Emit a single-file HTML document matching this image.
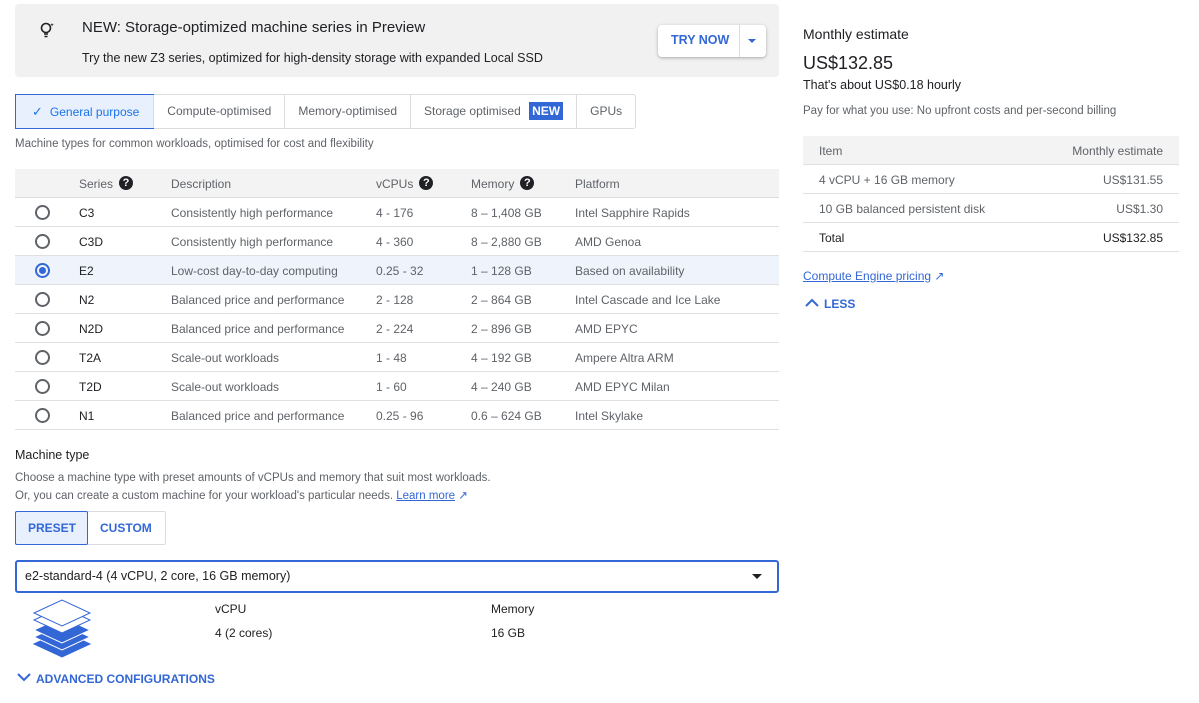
<!DOCTYPE html>
<html><head><meta charset="utf-8"><style>
*{box-sizing:border-box;margin:0;padding:0}
body{width:1199px;height:703px;background:#fff;font-family:"Liberation Sans",Arial,sans-serif;color:#202124;position:relative;overflow:hidden;font-size:12px}
.a{position:absolute;white-space:nowrap}
.banner{position:absolute;left:15px;top:4px;width:764px;height:73px;background:#f1f1f1;border-radius:4px}
.tabs{position:absolute;left:15px;top:94px;height:35px;display:flex;border:1px solid #dadce0;border-radius:3px}
.tab{padding:0 13px;line-height:33px;color:#5f6368;border-left:1px solid #dadce0;font-size:12px}
.tab:first-child{border-left:none}
.tab.sel{background:#e8f0fe;color:#1a73e8;border:1px solid #3367d6;margin:-1px;line-height:33px;padding:0 14px 0 16px}
.row{position:absolute;left:15px;width:764px;height:29px;border-bottom:1px solid #e0e0e0;color:#5f6368;font-size:12px}
.row span{position:absolute;top:8px}
.radio{position:absolute;left:20px;top:7px;width:15px;height:15px;border:2px solid #5f6368;border-radius:50%}
.q{display:inline-block;width:14px;height:14px;border-radius:50%;background:#202124;color:#fff;font-size:11px;font-weight:bold;text-align:center;line-height:14px;vertical-align:top;margin-left:6px;margin-top:-1px;font-style:normal}
.er{position:absolute;left:803px;width:376px;height:29px;border-bottom:1px solid #e0e0e0;font-size:12px;color:#5f6368}
.er span{position:absolute;top:8px}
</style></head><body>
<div class="banner"></div>
<svg class="a" style="left:38px;top:20px" width="20" height="20" viewBox="0 0 20 20"><circle cx="8" cy="8" r="4.5" fill="none" stroke="#202124" stroke-width="1.6"/><path d="M6 14h4M6.5 16.5h3" stroke="#202124" stroke-width="1.5"/><path d="M14 3l.5 1.2 1.2.5-1.2.5L14 6.4l-.5-1.2-1.2-.5 1.2-.5z" fill="#202124"/></svg>
<div class="a" style="left:82px;top:19px;font-size:15px;font-weight:500">NEW: Storage-optimized machine series in Preview</div>
<div class="a" style="left:82px;top:51px;font-size:12.5px">Try the new Z3 series, optimized for high-density storage with expanded Local SSD</div>
<div class="a" style="left:658px;top:25px;width:108px;height:32px;background:#fff;border-radius:4px;box-shadow:0 1px 3px rgba(0,0,0,.3)"></div>
<div class="a" style="left:671px;top:33px;font-size:12.5px;font-weight:bold;color:#3367d6">TRY NOW</div>
<div class="a" style="left:739px;top:25px;width:1px;height:32px;background:#dadce0"></div>
<div class="a" style="left:748px;top:39px;width:0;height:0;border-left:4px solid transparent;border-right:4px solid transparent;border-top:4px solid #3367d6"></div>

<div class="tabs">
<div class="tab sel"><span style="font-size:13px;margin-right:7px">✓</span>General purpose</div>
<div class="tab">Compute-optimised</div>
<div class="tab">Memory-optimised</div>
<div class="tab">Storage optimised <span style="background:#3367d6;color:#fff;font-weight:bold;padding:2px 3px;margin-left:5px">NEW</span></div>
<div class="tab">GPUs</div>
</div>
<div class="a" style="left:15px;top:138px;color:#5f6368;font-size:11.5px">Machine types for common workloads, optimised for cost and flexibility</div>

<div class="row" style="top:169px;background:#f3f3f3;height:29px;border-bottom:1px solid #dadce0">
<span style="left:64px">Series<i class="q">?</i></span><span style="left:156px">Description</span><span style="left:361px">vCPUs<i class="q">?</i></span><span style="left:456px">Memory<i class="q">?</i></span><span style="left:560px">Platform</span></div>

<div class="row" style="top:198px"><div class="radio"></div><span style="left:64px;color:#202124">C3</span><span style="left:156px">Consistently high performance</span><span style="left:361px">4 - 176</span><span style="left:456px">8 – 1,408 GB</span><span style="left:560px">Intel Sapphire Rapids</span></div>
<div class="row" style="top:227px"><div class="radio"></div><span style="left:64px;color:#202124">C3D</span><span style="left:156px">Consistently high performance</span><span style="left:361px">4 - 360</span><span style="left:456px">8 – 2,880 GB</span><span style="left:560px">AMD Genoa</span></div>
<div class="row" style="top:256px;background:#eef3fc"><div class="radio" style="border-color:#3367d6"><div style="position:absolute;left:2px;top:2px;width:7px;height:7px;border-radius:50%;background:#3367d6"></div></div><span style="left:64px;color:#202124">E2</span><span style="left:156px">Low-cost day-to-day computing</span><span style="left:361px">0.25 - 32</span><span style="left:456px">1 – 128 GB</span><span style="left:560px">Based on availability</span></div>
<div class="row" style="top:285px"><div class="radio"></div><span style="left:64px;color:#202124">N2</span><span style="left:156px">Balanced price and performance</span><span style="left:361px">2 - 128</span><span style="left:456px">2 – 864 GB</span><span style="left:560px">Intel Cascade and Ice Lake</span></div>
<div class="row" style="top:314px"><div class="radio"></div><span style="left:64px;color:#202124">N2D</span><span style="left:156px">Balanced price and performance</span><span style="left:361px">2 - 224</span><span style="left:456px">2 – 896 GB</span><span style="left:560px">AMD EPYC</span></div>
<div class="row" style="top:343px"><div class="radio"></div><span style="left:64px;color:#202124">T2A</span><span style="left:156px">Scale-out workloads</span><span style="left:361px">1 - 48</span><span style="left:456px">4 – 192 GB</span><span style="left:560px">Ampere Altra ARM</span></div>
<div class="row" style="top:372px"><div class="radio"></div><span style="left:64px;color:#202124">T2D</span><span style="left:156px">Scale-out workloads</span><span style="left:361px">1 - 60</span><span style="left:456px">4 – 240 GB</span><span style="left:560px">AMD EPYC Milan</span></div>
<div class="row" style="top:401px"><div class="radio"></div><span style="left:64px;color:#202124">N1</span><span style="left:156px">Balanced price and performance</span><span style="left:361px">0.25 - 96</span><span style="left:456px">0.6 – 624 GB</span><span style="left:560px">Intel Skylake</span></div>

<div class="a" style="left:15px;top:448px;font-size:12.5px;font-weight:500">Machine type</div>
<div class="a" style="left:15px;top:472px;color:#5f6368;font-size:11.5px">Choose a machine type with preset amounts of vCPUs and memory that suit most workloads.</div>
<div class="a" style="left:15px;top:488px;color:#5f6368;font-size:11.5px">Or, you can create a custom machine for your workload's particular needs. <span style="color:#3367d6;text-decoration:underline">Learn more</span> <span style="color:#3367d6">↗</span></div>
<div class="a" style="left:15px;top:511px;width:151px;height:34px;border:1px solid #dadce0;border-radius:2px"></div>
<div class="a" style="left:15px;top:511px;width:73px;height:34px;background:#e8f0fe;border:1px solid #3367d6;border-radius:2px"></div>
<div class="a" style="left:28px;top:521px;font-weight:bold;color:#3367d6;font-size:12px">PRESET</div>
<div class="a" style="left:100px;top:521px;font-weight:bold;color:#3367d6;font-size:12px">CUSTOM</div>
<div class="a" style="left:15px;top:560px;width:764px;height:33px;border:2px solid #3367d6;border-radius:3px"></div>
<div class="a" style="left:25px;top:569px;font-size:12.5px">e2-standard-4 (4 vCPU, 2 core, 16 GB memory)</div>
<div class="a" style="left:752px;top:574px;border-left:5px solid transparent;border-right:5px solid transparent;border-top:5px solid #202124"></div>
<svg class="a" style="left:32px;top:598px" width="60" height="62" viewBox="0 0 60 62"><g stroke="#3367d6" stroke-width="1"><path d="M2 46l28-13 28 13-28 13z" fill="#3367d6"/><path d="M2 39l28-13 28 13-28 13z" fill="#3367d6" stroke="#fff"/><path d="M2 32l28-13 28 13-28 13z" fill="#3367d6" stroke="#fff"/><path d="M2 22l28-13 28 13-28 13z" fill="#fff"/><path d="M2 15l28-13 28 13-28 13z" fill="#fff"/></g></svg>
<div class="a" style="left:215px;top:602px;font-weight:500">vCPU</div>
<div class="a" style="left:215px;top:626px">4 (2 cores)</div>
<div class="a" style="left:491px;top:602px;font-weight:500">Memory</div>
<div class="a" style="left:491px;top:626px">16 GB</div>
<svg class="a" style="left:17px;top:672px" width="14" height="10"><path d="M1 2l6 6 6-6" fill="none" stroke="#3367d6" stroke-width="2"/></svg>
<div class="a" style="left:36px;top:672px;font-weight:bold;color:#3367d6;font-size:12px">ADVANCED CONFIGURATIONS</div>

<div class="a" style="left:803px;top:26px;font-size:14px;font-weight:500">Monthly estimate</div>
<div class="a" style="left:803px;top:53px;font-size:18px">US$132.85</div>
<div class="a" style="left:803px;top:78px;font-size:12.5px">That's about US$0.18 hourly</div>
<div class="a" style="left:803px;top:105px;font-size:11.5px;color:#5f6368">Pay for what you use: No upfront costs and per-second billing</div>
<div class="er" style="top:136px;background:#f3f3f3"><span style="left:16px">Item</span><span style="right:16px">Monthly estimate</span></div>
<div class="er" style="top:165px"><span style="left:16px">4 vCPU + 16 GB memory</span><span style="right:16px">US$131.55</span></div>
<div class="er" style="top:194px"><span style="left:16px">10 GB balanced persistent disk</span><span style="right:16px">US$1.30</span></div>
<div class="er" style="top:223px"><span style="left:16px;color:#202124;font-weight:500">Total</span><span style="right:16px;color:#202124;font-weight:500">US$132.85</span></div>
<div class="a" style="left:803px;top:269px;color:#3367d6;font-size:12px"><span style="text-decoration:underline">Compute Engine pricing</span> ↗</div>
<svg class="a" style="left:805px;top:298px" width="14" height="10"><path d="M1 8l6-6 6 6" fill="none" stroke="#3367d6" stroke-width="2"/></svg>
<div class="a" style="left:824px;top:297px;font-weight:bold;color:#3367d6;font-size:12px">LESS</div>
</body></html>
